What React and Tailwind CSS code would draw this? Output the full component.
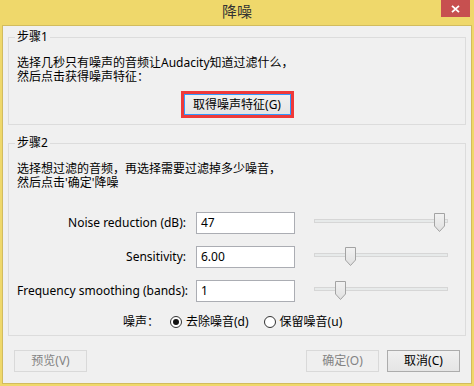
import React from "react";

function Slider({ pos }) {
  return (
    <svg width="134" height="22" viewBox="0 0 134 22" className="block">
      <defs>
        <linearGradient id="thumbFill" x1="0" y1="0" x2="0" y2="1">
          <stop offset="0" stopColor="#F2F2F2" />
          <stop offset="1" stopColor="#E0E0E0" />
        </linearGradient>
      </defs>
      <rect x="0.5" y="7.5" width="133" height="3" fill="#E7EAEA" stroke="#D6D6D6" />
      <path
        transform={`translate(${pos} 0)`}
        d="M0.5 1.5H10.5V14L5.5 19.5L0.5 14Z"
        fill="url(#thumbFill)"
        stroke="#A3A3A3"
      />
    </svg>
  );
}

function Row({ label, value, pos, className }) {
  return (
    <div className={"flex items-center h-[22px] " + className}>
      <div className="w-[169px] shrink-0 text-right leading-[14px] whitespace-nowrap">{label}</div>
      <div className="ml-[10px] w-[99px] h-[22px] shrink-0 border border-[#ABADB3] bg-white pl-[4px] flex items-center leading-[14px]">
        {value}
      </div>
      <div className="ml-[19px]">
        <Slider pos={pos} />
      </div>
    </div>
  );
}

function WinButton({ children, disabled }) {
  return (
    <button
      className={
        disabled
          ? "w-[73px] h-[22px] border border-[#D9D9D9] bg-[#EFEFEF] text-[#838383] leading-[14px]"
          : "w-[73px] h-[22px] border border-[#ACACAC] bg-linear-to-b from-[#F0F0F0] to-[#E5E5E5] text-black leading-[14px]"
      }
    >
      {children}
    </button>
  );
}

export default function App() {
  return (
    <div className="w-[474px] h-[386px] bg-[#EFD86B] flex flex-col overflow-hidden text-[12px] text-black font-[family-name:'Noto_Sans','Noto_Sans_CJK_SC',sans-serif]">
      {/* title bar */}
      <div className="h-[25px] flex items-start shrink-0">
        <div className="w-[33px]" />
        <div className="flex-1 text-center text-[15px] leading-[21px] text-[#333] font-[family-name:'Noto_Sans_CJK_SC',sans-serif]">
          降噪
        </div>
        <button className="w-[29px] h-[17px] mr-[4px] bg-[#C75050] flex items-center justify-center">
          <svg width="9" height="8" viewBox="0 0 9 8">
            <path d="M1 0.8L8 7.2M8 0.8L1 7.2" stroke="#fff" strokeWidth="1.8" />
          </svg>
        </button>
      </div>

      {/* client area */}
      <div className="flex-1 mx-[2px] mb-[2px] border border-[#D2BC5E] bg-[#F0F0F0] flex flex-col">
        <fieldset className="mt-[4px] mx-[5px] border border-[#DCDCDC] px-[8px] pt-[12px] pb-[6px]">
          <legend className="px-[2px] -ml-[2px] leading-[14px]">步骤1</legend>
          <p className="leading-[14px] whitespace-nowrap">选择几秒只有噪声的音频让Audacity知道过滤什么，</p>
          <p className="leading-[14px] whitespace-nowrap">然后点击获得噪声特征：</p>
          <div className="mt-[7px] flex justify-center">
            <div className="border-[3px] border-[#EF3A3A]">
              <button className="w-[107px] h-[21px] border border-[#3399FF] bg-linear-to-b from-[#F0F0F0] to-[#E5E5E5] leading-[14px] block">
                取得噪声特征(G)
              </button>
            </div>
          </div>
        </fieldset>

        <fieldset className="mt-[11px] mx-[5px] border border-[#DCDCDC] px-[8px] pt-[12px] pb-[6px]">
          <legend className="px-[2px] -ml-[2px] leading-[14px]">步骤2</legend>
          <p className="leading-[14px] whitespace-nowrap">选择想过滤的音频，再选择需要过滤掉多少噪音，</p>
          <p className="leading-[14px] whitespace-nowrap">然后点击'确定'降噪</p>

          <Row className="mt-[22px]" label="Noise reduction (dB):" value="47" pos={120} />
          <Row className="mt-[12px]" label="Sensitivity:" value="6.00" pos={31} />
          <Row className="mt-[12px]" label="Frequency smoothing (bands):" value="1" pos={21} />

          <div className="mt-[13px] flex items-center h-[14px] pl-[106px] leading-[14px] whitespace-nowrap">
            <span>噪声：</span>
            <span className="ml-[11px] w-[12px] h-[12px] rounded-full border border-[#333] bg-white flex items-center justify-center">
              <span className="w-[6px] h-[6px] rounded-full bg-[#111]" />
            </span>
            <span className="ml-[4px]">去除噪音(d)</span>
            <span className="ml-[15px] w-[12px] h-[12px] rounded-full border border-[#333] bg-white" />
            <span className="ml-[4px]">保留噪音(u)</span>
          </div>
        </fieldset>

        <div className="mt-[14px] flex px-[11px]">
          <WinButton disabled>预览(V)</WinButton>
          <div className="flex-1" />
          <WinButton disabled>确定(O)</WinButton>
          <div className="w-[8px]" />
          <WinButton>取消(C)</WinButton>
        </div>
      </div>
    </div>
  );
}
